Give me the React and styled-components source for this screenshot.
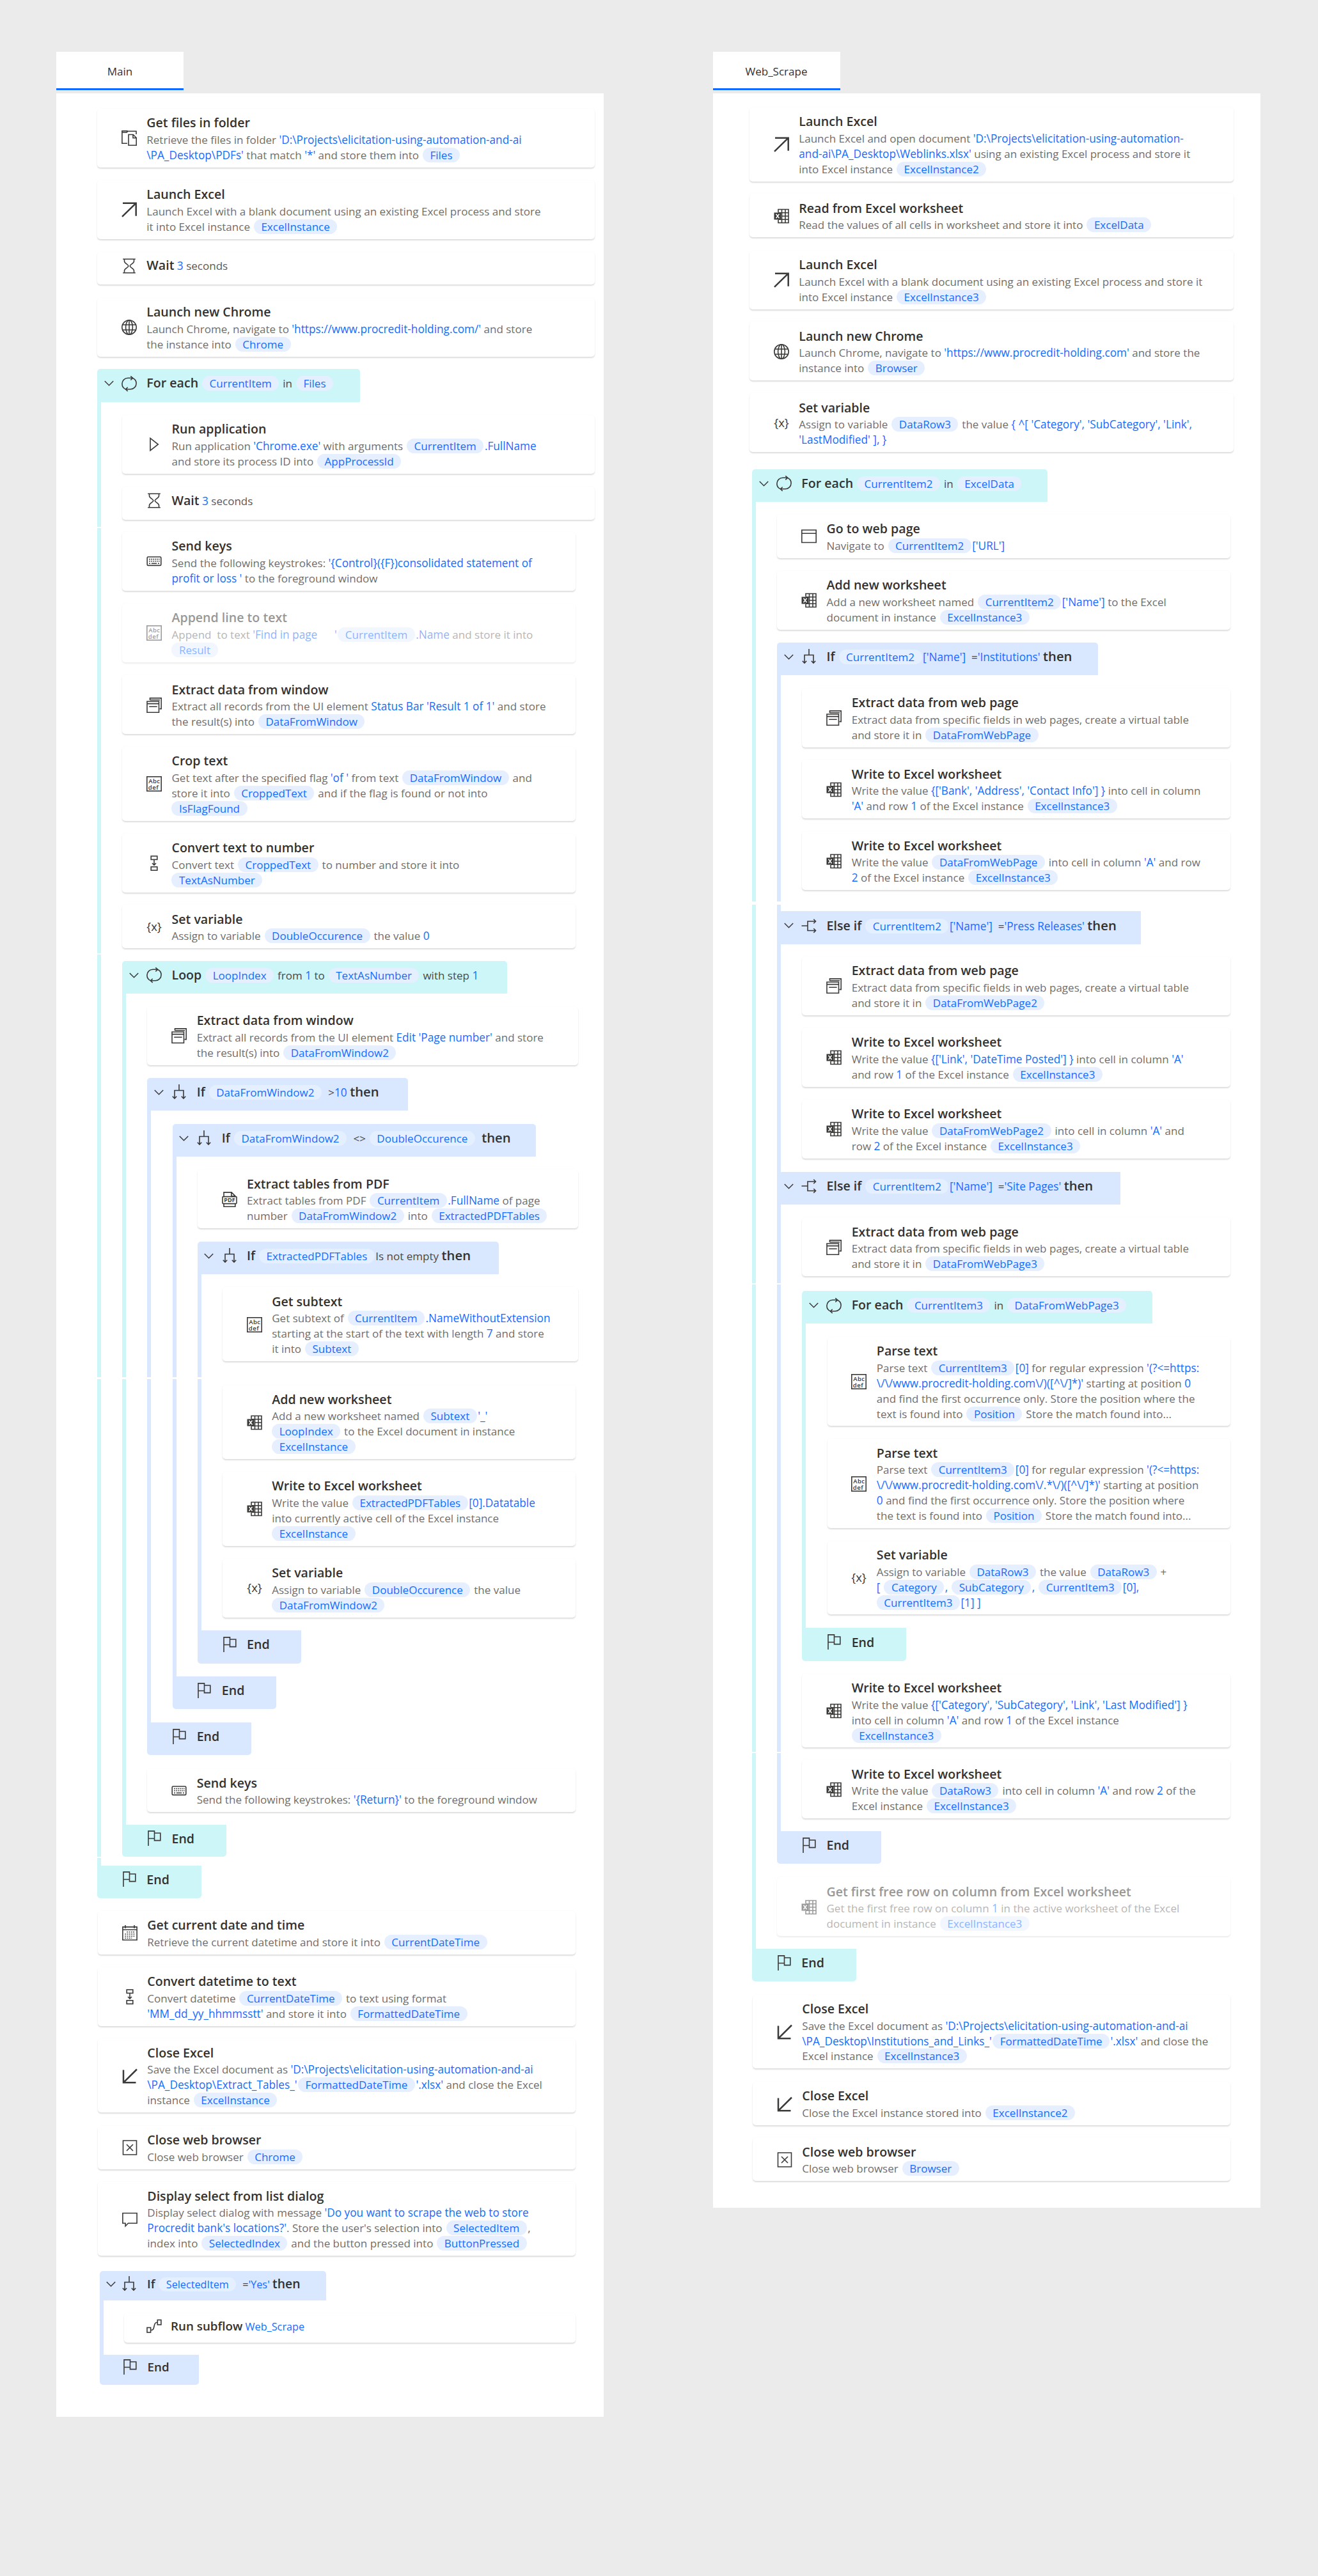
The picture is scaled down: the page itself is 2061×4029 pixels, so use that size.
import React from "react";
import styled, { createGlobalStyle, css } from "styled-components";

const GlobalStyle = createGlobalStyle`
  * { box-sizing: border-box; }
  body { margin: 0; background: #ebebeb; }
`;

const ink = "#323130";
const muted = "#706e6c";
const blue = "#146cff";
const tones = { loop: "#cdf6f9", cond: "#d9e7ff" };

/* ---------- layout ---------- */

const Canvas = styled.main`
  display: flex;
  align-items: flex-start;
  gap: 170.5px;
  min-height: 4029px;
  padding: 81px 0 0 88px;
  font-family: "Open Sans", "Noto Sans", sans-serif;
  font-size: 17.05px;
  color: ${muted};
`;

const Column = styled.section`
  display: flex;
  flex-direction: column;
  align-items: flex-start;
  width: 856px;
`;

const Tab = styled.header`
  display: flex;
  align-items: center;
  justify-content: center;
  width: 199px;
  height: 60px;
  margin-bottom: 4.5px;
  padding-top: 4px;
  border-bottom: 3px solid #0f6bff;
  background: #fff;
  color: ${ink};
`;

const Panel = styled.div`
  width: 100%;
  padding: 0 ${(p) => p.$right}px ${(p) => p.$bottom}px ${(p) => p.$left}px;
  background: #fff;
`;

const Slot = styled.div`
  display: flex;
  flex-direction: column;
  justify-content: flex-end;
  height: ${(p) => p.$h}px;
  margin-right: ${(p) => -(p.$bleed || 0)}px;
  margin-left: ${(p) => p.$shift || 0}px;
`;

const CardBox = styled.article`
  display: flex;
  align-items: center;
  padding: ${(p) => (p.$single ? "7px 0 14px" : "8.5px 0 7px")};
  min-height: ${(p) => (p.$single ? "51.5px" : "0")};
  border-radius: 5px;
  background: #fff;
  box-shadow: 0 2px 2px rgba(0, 0, 0, 0.125), 0 0 2px rgba(0, 0, 0, 0.04);
  opacity: ${(p) => (p.$off ? 0.5 : 1)};
  ${(p) =>
    p.$compact &&
    css`
      min-height: 46px;
      padding: 3px 0 9px;
    `}
`;

const IconCell = styled.span`
  display: flex;
  flex: none;
  justify-content: center;
  width: ${(p) => (p.$compact ? 24 : 27)}px;
  margin: ${(p) => p.$m};
`;

const CardText = styled.div`
  white-space: pre;
`;

const Title = styled.h3`
  margin: 0;
  font-size: 19.6px;
  font-weight: 600;
  line-height: 28.5px;
  color: ${ink};
`;

const Line = styled.p`
  margin: 0;
  height: 23.9px;
  line-height: 23.9px;
`;

const Inline = styled.p`
  margin: 0;
  line-height: 28px;
  color: #5b5957;
  font-size: ${(p) => (p.$compact ? 16.1 : 17.05)}px;
`;

const Strong = styled.strong`
  font-size: ${(p) => (p.$compact ? 18.8 : 19.6)}px;
  font-weight: 600;
  color: ${ink};
`;

const Keyword = styled(Strong)`
  font-size: ${(p) => (p.$compact ? 19.4 : 20.3)}px;
`;

const Value = styled.span`
  font-size: 1.01em;
  color: ${blue};
`;

const Chip = styled.span`
  margin: 0 1.5px 0 ${(p) => (p.$lead ? 0 : 1.5)}px;
  padding: 0 11.5px;
  border-radius: 12px;
  background: #e5efff;
  color: ${blue};
`;

const HeaderChip = styled(Chip)`
  background: #e4f0ff;
`;

const HeaderBox = styled.div`
  display: flex;
  align-items: center;
  width: ${(p) => p.$w}px;
  height: ${(p) => p.$box}px;
  padding-bottom: ${(p) => (p.$end ? 8 : 6)}px;
  border-radius: ${(p) => (p.$end ? "0 0 5px 5px" : p.$branch ? "0" : "5px 5px 0 0")};
  background: ${(p) => tones[p.$tone]};
`;

const HeaderText = styled.div`
  white-space: pre;
  line-height: 28px;
  color: #4a4948;
  font-size: ${(p) => (p.$compact ? 16.2 : 17.05)}px;
`;

const ChevronCell = styled.span`
  display: flex;
  justify-content: center;
  width: 16px;
  margin-left: ${(p) => (p.$compact ? 9 : 10)}px;
`;

const Body = styled.div`
  padding: 0 0 ${(p) => p.$pad}px ${(p) => (p.$compact ? 32 : 33.2)}px;
  border-left: 6px solid ${(p) => tones[p.$tone]};
`;

const Seam = styled.div`
  height: ${(p) => p.$h}px;
  margin: ${(p) => p.$gap}px 0 0 -${(p) => p.$reach}px;
  background: #fff;
`;

/* ---------- icons ---------- */

const Svg = styled.svg`
  display: block;
  overflow: visible;
  fill: none;
  stroke: #3b3a39;
  stroke-width: 1.6;
`;

const GlyphText = styled.text`
  fill: #3b3a39;
  stroke: none;
  font-family: "Open Sans", sans-serif;
  font-size: ${(p) => p.$s}px;
  font-weight: ${(p) => p.$w || 400};
`;

const glyphs = {
  files: (
    <>
      <path d="M9 20.2H.9V3.2h7l2-2H23V6" />
      <path d="M.9 3.2V.9h8v1.5" />
      <path d="M11 6.5h7.2l5 5V23.2H11z" fill="#fff" />
      <path d="M18 6.6v5.2h5.2" />
    </>
  ),
  open: <path d="M2 1.7h20.7v20M22.5 1.9L1 22.8" strokeWidth="2.5" />,
  close: <path d="M21.5 22.3H2V2.5M2.2 22.1L23 1.5" strokeWidth="2.5" />,
  hourglass: (
    <path d="M2.2 1.2h19.6M2.2 22.8h19.6M4.5 1.2v3.6c0 3.2 6.3 4.7 6.3 7.2s-6.3 4-6.3 7.2v3.6M19.5 1.2v3.6c0 3.2-6.3 4.7-6.3 7.2s6.3 4 6.3 7.2v3.6" />
  ),
  globe: (
    <>
      <circle cx="12" cy="12" r="11.2" />
      <ellipse cx="12" cy="12" rx="5.4" ry="11.2" />
      <path d="M12 .8v22.4M1.8 8h20.4M1.8 16h20.4" />
    </>
  ),
  loop: (
    <>
      <path d="M7.5 21.2C3.6 20 .9 16.5.9 12.3.9 7.300 5 3.300 10 3.300h7.500" />
      <path d="M14.300.3l3.300 3-3.300 3.100" />
      <path d="M16.500 2.900c3.900 1.200 6.600 4.800 6.600 8.900 0 5-4.100 9-9.100 9H6.500" />
      <path d="M9.700 17.700l-3.200 3.100 3.200 3.100" />
    </>
  ),
  branch: <path d="M12 0v9.5M5 22V9.500h14V22M1.800 18.800L5 22l3.200-3.200M15.800 18.800L19 22l3.200-3.200" />,
  elseif: <path d="M.5 12H10M22.500 5H10v14.500h12.500M19.300 1.800L22.500 5l-3.200 3.200M19.300 16.300l3.200 3.200-3.200 3.200" />,
  flag: <path d="M3 24V.9h9.500v11.600H3M12.500 4h9.300v11.600h-9.300v-3" />,
  variable: (
    <GlyphText x="12" y="17.5" $s="18.5" textAnchor="middle">
      {"{x}"}
    </GlyphText>
  ),
  play: <path d="M6 2.300v19.400L18.300 12z" />,
  keyboard: (
    <>
      <rect x="1.200" y="5" width="21.600" height="13.400" rx="1.500" />
      <path d="M4 8.600h16.500M4 11.800h16.500" strokeDasharray="1.700 1.300" />
      <path d="M4 15.200h2M7.800 15.200h8.400M18 15.200h2" />
    </>
  ),
  text: (
    <>
      <rect x=".8" y=".8" width="22.400" height="22.400" />
      <GlyphText x="3.300" y="10.600" $s="9.600" $w="600" textLength="17.600">
        Abc
      </GlyphText>
      <GlyphText x="2.700" y="20.800" $s="9.600" $w="600" textLength="16">
        def
      </GlyphText>
    </>
  ),
  windows: (
    <>
      <path d="M5.500 4V.9h17.700v16.700H20.500M5.500 3.800h15.500" />
      <path d="M1 6h18.500v17.200H1zM1 9.600h18.500M4.200 14.300h12.500" />
    </>
  ),
  convert: (
    <>
      <rect x="7.200" y="1" width="9.600" height="5.400" />
      <rect x="7.200" y="17.800" width="9.600" height="5.400" />
      <path d="M12 6.400v8.400M9 12l3 3 3-3" />
    </>
  ),
  pdf: (
    <>
      <path d="M3 7V.9h12l5.800 5.800V7M14.800.9v5.900h6M3 19v4.200h17.800V19" />
      <rect x="1" y="7.600" width="22" height="11" rx="1" />
      <GlyphText x="12" y="16.400" $s="9" $w="700" textAnchor="middle">
        PDF
      </GlyphText>
    </>
  ),
  excel: (
    <>
      <path d="M7 6V1.500h16v21H7V18M12.500 1.500v21M18 1.500v21M7 6.700h16M12 12h11M7 17.300h16" />
      <rect x=".5" y="6.500" width="11" height="11" fill="#3b3a39" stroke="none" />
      <path d="M3.500 8.800l5 6.400M8.500 8.800l-5 6.400" stroke="#fff" strokeWidth="1.500" />
    </>
  ),
  calendar: (
    <>
      <path d="M.9 2.900h22.200v20.300H.9zM.9 7.300h22.200M5 0v5M19 0v5" />
      <path d="M7.300 10.800h13M4.300 14h16M4.300 17.200h16M4.300 20.200h11" strokeDasharray="1.800 1.500" />
    </>
  ),
  closeBox: <path d="M1.500 1h21v22h-21zM7 7l10 10M17 7L7 17" />,
  chat: <path d="M.9 2.500h22.200v15.700H9.500l-4.400 4.600v-4.600H.9z" />,
  subflow: (
    <>
      <rect x="1" y="14.500" width="5.600" height="7.500" />
      <rect x="17.300" y="2.500" width="5.600" height="7.500" />
      <path d="M6.600 18.500c4.500 0 4.500-2 5.400-6s1.500-6.300 5.300-6.300" />
    </>
  ),
  page: <path d="M.8 2h22.400v19.500H.8zM.8 7.300h22.400" />,
};

const Icon = ({ name }) => (
  <Svg width="24" height="24" viewBox="0 0 24 24">
    {glyphs[name]}
  </Svg>
);

const Chevron = () => (
  <Svg width="15" height="9" viewBox="0 0 15 9">
    <path d="M.8 1l6.700 6.800L14.200 1" strokeWidth="1.500" />
  </Svg>
);

/* ---------- text markup: «variable»  ‹literal›  ⟦keyword⟧ ---------- */

const rich = (source, { ChipType = Chip, compact = false } = {}) =>
  source
    .split(/(«[^»]*»|‹[^›]*›|⟦[^⟧]*⟧)/)
    .filter(Boolean)
    .map((part, i) => {
      const inner = part.slice(1, -1);
      if (part[0] === "«")
        return (
          <ChipType key={i} $lead={i === 0}>
            {inner}
          </ChipType>
        );
      if (part[0] === "‹") return <Value key={i}>{inner}</Value>;
      if (part[0] === "⟦") {
        const Word = i === 0 ? Strong : Keyword;
        return (
          <Word key={i} $compact={compact}>
            {inner}
          </Word>
        );
      }
      return part;
    });

/* ---------- flow parts ---------- */

const Step = ({ h, icon, title, lines, off, bleed, shift }) => (
  <Slot $h={h} $bleed={bleed} $shift={shift}>
    <CardBox $off={off}>
      <IconCell $m="0 14px 0 36.300px">
        <Icon name={icon} />
      </IconCell>
      <CardText>
        <Title>{title}</Title>
        {lines.map((line) => (
          <Line key={line}>{rich(line)}</Line>
        ))}
      </CardText>
    </CardBox>
  </Slot>
);

const ShortStep = ({ h, icon, text, bleed, compact }) => (
  <Slot $h={h} $bleed={bleed}>
    <CardBox $single $compact={compact}>
      <IconCell $compact={compact} $m={compact ? "0 14px 0 35px" : "0 14px 0 36.300px"}>
        <Icon name={icon} />
      </IconCell>
      <CardText>
        <Inline $compact={compact}>{rich(text, { compact })}</Inline>
      </CardText>
    </CardBox>
  </Slot>
);

const Head = ({ h, w, box = 51.5, tone, icon, text, branch, compact }) => (
  <Slot $h={h}>
    <HeaderBox $w={w} $box={box} $tone={tone} $branch={branch}>
      <ChevronCell $compact={compact}>
        <Chevron />
      </ChevronCell>
      <IconCell $compact={compact} $m={compact ? "0 16px 0 9px" : "0 14px 0 10.300px"}>
        <Icon name={icon} />
      </IconCell>
      <HeaderText $compact={compact}>{rich(text, { ChipType: HeaderChip, compact })}</HeaderText>
    </HeaderBox>
  </Slot>
);

const End = ({ w = 162.5, box = 51.5, tone, compact }) => (
  <HeaderBox $w={w} $box={box} $tone={tone} $end>
    <IconCell $compact={compact} $m={compact ? "0 16px 0 34.500px" : "0 14px 0 36.300px"}>
      <Icon name="flag" />
    </IconCell>
    <Strong $compact={compact}>End</Strong>
  </HeaderBox>
);

const Offset = styled.div`
  margin-left: ${(p) => p.$x}px;
`;

/* ---------- flows ---------- */

const MainFlow = () => (
  <Panel $left={64} $right={44} $bottom={50}>
    <Step h={116} bleed={30} icon="files" title="Get files in folder"
      lines={["Retrieve the files in folder ‹'D:\\Projects\\elicitation-using-automation-and-ai›", "‹\\PA_Desktop\\PDFs'› that match ‹'*'› and store them into «Files»"]} />
    <Step h={112} bleed={30} icon="open" title="Launch Excel"
      lines={["Launch Excel with a blank document using an existing Excel process and store", "it into Excel instance «ExcelInstance»"]} />
    <ShortStep h={71.5} bleed={30} icon="hourglass" text="⟦Wait⟧ ‹3› seconds" />
    <Step h={112.5} bleed={30} icon="globe" title="Launch new Chrome"
      lines={["Launch Chrome, navigate to ‹'https://www.procredit-holding.com/'› and store", "the instance into «Chrome»"]} />

    <Head h={71} w={410.5} tone="loop" icon="loop" text="⟦For each⟧ «CurrentItem» in «Files»" />
    <Body $tone="loop" $pad={11.5}>
      <Step h={112} bleed={30} icon="play" title="Run application"
        lines={["Run application ‹'Chrome.exe'› with arguments «CurrentItem»‹.FullName›", "and store its process ID into «AppProcessId»"]} />
      <ShortStep h={72} bleed={30} icon="hourglass" text="⟦Wait⟧ ‹3› seconds" />
      <Seam $gap={11.5} $h={1.5} $reach={42} />
      <Step h={98} icon="keyboard" title="Send keys"
        lines={["Send the following keystrokes: ‹'{Control}({F})consolidated statement of›", "‹profit or loss '› to the foreground window"]} />
      <Step h={112} off icon="text" title="Append line to text"
        lines={["Append  to text ‹'Find in page      '›«CurrentItem»‹.Name› and store it into", "«Result»"]} />
      <Step h={112.5} icon="windows" title="Extract data from window"
        lines={["Extract all records from the UI element ‹Status Bar 'Result 1 of 1'› and store", "the result(s) into «DataFromWindow»"]} />
      <Step h={135.5} icon="text" title="Crop text"
        lines={["Get text after the specified flag ‹'of '› from text «DataFromWindow» and", "store it into «CroppedText» and if the flag is found or not into", "«IsFlagFound»"]} />
      <Step h={112} icon="convert" title="Convert text to number"
        lines={["Convert text «CroppedText» to number and store it into", "«TextAsNumber»"]} />
      <Step h={87.5} icon="variable" title="Set variable"
        lines={["Assign to variable «DoubleOccurence» the value ‹0›"]} />
      <Seam $gap={8} $h={1.5} $reach={42} />

      <Head h={61.5} w={601.5} tone="loop" icon="loop" text="⟦Loop⟧ «LoopIndex» from ‹1› to «TextAsNumber» with step ‹1›" />
      <Body $tone="loop" $pad={20}>
        <Step h={111.5} bleed={3.5} icon="windows" title="Extract data from window"
          lines={["Extract all records from the UI element ‹Edit 'Page number'› and store", "the result(s) into «DataFromWindow2»"]} />

        <Head h={71.5} w={408} tone="cond" icon="branch" text="⟦If⟧ «DataFromWindow2»  >‹10› ⟦then⟧" />
        <Body $tone="cond" $pad={21}>
          <Head h={72} w={568} tone="cond" icon="branch" text="⟦If⟧ «DataFromWindow2»  <> «DoubleOccurence»  ⟦then⟧" />
          <Body $tone="cond" $pad={20.5}>
            <Step h={112} bleed={3.5} icon="pdf" title="Extract tables from PDF"
              lines={["Extract tables from PDF «CurrentItem»‹.FullName› of page", "number «DataFromWindow2» into «ExtractedPDFTables»"]} />

            <Head h={72} w={471} tone="cond" icon="branch" text="⟦If⟧ «ExtractedPDFTables»Is not empty ⟦then⟧" />
            <Body $tone="cond" $pad={20.5}>
              <Step h={136} bleed={3.5} icon="text" title="Get subtext"
                lines={["Get subtext of «CurrentItem»‹.NameWithoutExtension›", "starting at the start of the text with length ‹7› and store", "it into «Subtext»"]} />
              <Seam $gap={24.5} $h={3} $reach={200} />
              <Step h={125.5} icon="excel" title="Add new worksheet"
                lines={["Add a new worksheet named «Subtext»‹'_'›", "«LoopIndex» to the Excel document in instance", "«ExcelInstance»"]} />
              <Step h={135.5} icon="excel" title="Write to Excel worksheet"
                lines={["Write the value «ExtractedPDFTables»‹[0].Datatable›", "into currently active cell of the Excel instance", "«ExcelInstance»"]} />
              <Step h={112} icon="variable" title="Set variable"
                lines={["Assign to variable «DoubleOccurence» the value", "«DataFromWindow2»"]} />
            </Body>
            <End tone="cond" />
          </Body>
          <End tone="cond" box={51} />
        </Body>
        <End tone="cond" box={51} />

        <Step h={89} icon="keyboard" title="Send keys"
          lines={["Send the following keystrokes: ‹'{Return}'› to the foreground window"]} />
      </Body>
      <End tone="loop" box={50} />
      <Seam $gap={0} $h={2} $reach={42} />
    </Body>
    <End tone="loop" />

    <Step h={87.5} shift={1} icon="calendar" title="Get current date and time"
      lines={["Retrieve the current datetime and store it into «CurrentDateTime»"]} />
    <Step h={112} shift={1} icon="convert" title="Convert datetime to text"
      lines={["Convert datetime «CurrentDateTime» to text using format", "‹'MM_dd_yy_hhmmsstt'› and store it into «FormattedDateTime»"]} />
    <Step h={135.5} shift={1} icon="close" title="Close Excel"
      lines={["Save the Excel document as ‹'D:\\Projects\\elicitation-using-automation-and-ai›", "‹\\PA_Desktop\\Extract_Tables_'›«FormattedDateTime»‹'.xlsx'› and close the Excel", "instance «ExcelInstance»"]} />
    <Step h={88.5} shift={1} icon="closeBox" title="Close web browser"
      lines={["Close web browser «Chrome»"]} />
    <Step h={135.5} shift={1} icon="chat" title="Display select from list dialog"
      lines={["Display select dialog with message ‹'Do you want to scrape the web to store›", "‹Procredit bank's locations?'›. Store the user's selection into «SelectedItem»,", "index into «SelectedIndex» and the button pressed into «ButtonPressed»"]} />

    <Offset $x={4}>
      <Head h={70} w={354} box={46} compact tone="cond" icon="branch" text="⟦If⟧ «SelectedItem»  =‹'Yes'› ⟦then⟧" />
      <Body $compact $tone="cond" $pad={19}>
        <ShortStep h={66} compact icon="subflow" text="⟦Run subflow⟧ ‹Web_Scrape›" />
      </Body>
      <End tone="cond" w={155} box={46.5} compact />
    </Offset>
  </Panel>
);

const WebScrapeFlow = () => (
  <Panel $left={57.5} $right={46.5} $bottom={41.5}>
    <Step h={138} bleed={5} icon="open" title="Launch Excel"
      lines={["Launch Excel and open document ‹'D:\\Projects\\elicitation-using-automation-›", "‹and-ai\\PA_Desktop\\Weblinks.xlsx'› using an existing Excel process and store it", "into Excel instance «ExcelInstance2»"]} />
    <Step h={87.5} bleed={5} icon="excel" title="Read from Excel worksheet"
      lines={["Read the values of all cells in worksheet and store it into «ExcelData»"]} />
    <Step h={112.5} bleed={5} icon="open" title="Launch Excel"
      lines={["Launch Excel with a blank document using an existing Excel process and store it", "into Excel instance «ExcelInstance3»"]} />
    <Step h={111.5} bleed={5} icon="globe" title="Launch new Chrome"
      lines={["Launch Chrome, navigate to ‹'https://www.procredit-holding.com'› and store the", "instance into «Browser»"]} />
    <Step h={112} bleed={5} icon="variable" title="Set variable"
      lines={["Assign to variable «DataRow3» the value ‹{ ^[ 'Category', 'SubCategory', 'Link',›", "‹'LastModified' ], }›"]} />

    <Offset $x={4}>
      <Head h={78} w={461.5} tone="loop" icon="loop" text="⟦For each⟧ «CurrentItem2» in «ExcelData»" />
      <Body $tone="loop" $pad={20.3}>
        <Step h={87.5} icon="page" title="Go to web page"
          lines={["Navigate to «CurrentItem2»‹['URL']›"]} />
        <Step h={112} icon="excel" title="Add new worksheet"
          lines={["Add a new worksheet named «CurrentItem2»‹['Name']› to the Excel", "document in instance «ExcelInstance3»"]} />

        <Head h={71.5} w={502} tone="cond" icon="branch" text="⟦If⟧ «CurrentItem2»‹['Name']›  =‹'Institutions'› ⟦then⟧" />
        <Body $tone="cond" $pad={10.7}>
          <Step h={112.5} icon="windows" title="Extract data from web page"
            lines={["Extract data from specific fields in web pages, create a virtual table", "and store it in «DataFromWebPage»"]} />
          <Step h={111.5} icon="excel" title="Write to Excel worksheet"
            lines={["Write the value ‹{['Bank', 'Address', 'Contact Info'] }› into cell in column", "‹'A'› and row ‹1› of the Excel instance «ExcelInstance3»"]} />
          <Step h={112} icon="excel" title="Write to Excel worksheet"
            lines={["Write the value «DataFromWebPage» into cell in column ‹'A'› and row", "‹2› of the Excel instance «ExcelInstance3»"]} />
          <Seam $gap={17.5} $h={5} $reach={82} />
        </Body>

        <Head h={51.4} box={51.4} w={568.5} branch tone="cond" icon="elseif" text="⟦Else if⟧ «CurrentItem2»‹['Name']›  =‹'Press Releases'› ⟦then⟧" />
        <Body $tone="cond" $pad={21}>
          <Step h={111} icon="windows" title="Extract data from web page"
            lines={["Extract data from specific fields in web pages, create a virtual table", "and store it in «DataFromWebPage2»"]} />
          <Step h={112} icon="excel" title="Write to Excel worksheet"
            lines={["Write the value ‹{['Link', 'DateTime Posted'] }› into cell in column ‹'A'›", "and row ‹1› of the Excel instance «ExcelInstance3»"]} />
          <Step h={112} icon="excel" title="Write to Excel worksheet"
            lines={["Write the value «DataFromWebPage2» into cell in column ‹'A'› and", "row ‹2› of the Excel instance «ExcelInstance3»"]} />
        </Body>

        <Head h={51.4} box={51.4} w={536.5} branch tone="cond" icon="elseif" text="⟦Else if⟧ «CurrentItem2»‹['Name']›  =‹'Site Pages'› ⟦then⟧" />
        <Body $tone="cond" $pad={20}>
          <Step h={112} icon="windows" title="Extract data from web page"
            lines={["Extract data from specific fields in web pages, create a virtual table", "and store it in «DataFromWebPage3»"]} />
          <Seam $gap={11} $h={2.5} $reach={82} />

          <Head h={61} box={51} w={547.5} tone="loop" icon="loop" text="⟦For each⟧ «CurrentItem3» in «DataFromWebPage3»" />
          <Body $tone="loop" $pad={21}>
            <Step h={160} icon="text" title="Parse text"
              lines={["Parse text «CurrentItem3»‹[0]› for regular expression ‹'(?<=https:›", "‹\\/\\/www.procredit-holding.com\\/)([^\\/]*)'› starting at position ‹0›", "and find the first occurrence only. Store the position where the", "text is found into «Position» Store the match found into..."]} />
            <Step h={159.5} icon="text" title="Parse text"
              lines={["Parse text «CurrentItem3»‹[0]› for regular expression ‹'(?<=https:›", "‹\\/\\/www.procredit-holding.com\\/.*\\/)([^\\/]*)'› starting at position", "‹0› and find the first occurrence only. Store the position where", "the text is found into «Position» Store the match found into..."]} />
            <Step h={135.5} icon="variable" title="Set variable"
              lines={["Assign to variable «DataRow3» the value «DataRow3» +", "‹[ ›«Category»‹, ›«SubCategory»‹, ›«CurrentItem3»‹[0],›", "«CurrentItem3»‹[1] ]›"]} />
          </Body>
          <End tone="loop" />

          <Step h={135.5} icon="excel" title="Write to Excel worksheet"
            lines={["Write the value ‹{['Category', 'SubCategory', 'Link', 'Last Modified'] }›", "into cell in column ‹'A'› and row ‹1› of the Excel instance", "«ExcelInstance3»"]} />
          <Seam $gap={7} $h={2} $reach={82} />
          <Step h={101.5} icon="excel" title="Write to Excel worksheet"
            lines={["Write the value «DataRow3» into cell in column ‹'A'› and row ‹2› of the", "Excel instance «ExcelInstance3»"]} />
        </Body>
        <End tone="cond" box={51.4} />

        <Step h={112.7} off icon="excel" title="Get first free row on column from Excel worksheet"
          lines={["Get the first free row on column ‹1› in the active worksheet of the Excel", "document in instance «ExcelInstance3»"]} />
      </Body>
      <End tone="loop" box={51} />
    </Offset>

    <Step h={136} shift={5} icon="close" title="Close Excel"
      lines={["Save the Excel document as ‹'D:\\Projects\\elicitation-using-automation-and-ai›", "‹\\PA_Desktop\\Institutions_and_Links_'›«FormattedDateTime»‹'.xlsx'› and close the", "Excel instance «ExcelInstance3»"]} />
    <Step h={88.5} shift={5} icon="close" title="Close Excel"
      lines={["Close the Excel instance stored into «ExcelInstance2»"]} />
    <Step h={87.5} shift={5} icon="closeBox" title="Close web browser"
      lines={["Close web browser «Browser»"]} />
  </Panel>
);

export default function App() {
  return (
    <>
      <GlobalStyle />
      <Canvas>
        <Column>
          <Tab>Main</Tab>
          <MainFlow />
        </Column>
        <Column>
          <Tab>Web_Scrape</Tab>
          <WebScrapeFlow />
        </Column>
      </Canvas>
    </>
  );
}
